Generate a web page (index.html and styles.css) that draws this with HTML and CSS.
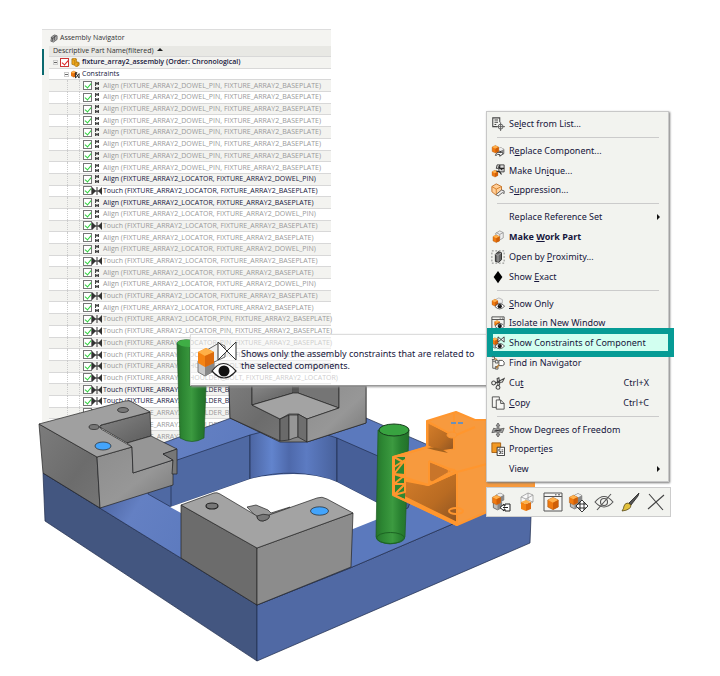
FILE: index.html
```html
<!DOCTYPE html>
<html lang="en">
<head>
<meta charset="utf-8">
<meta name="viewport" content="width=device-width, initial-scale=1">
<title>Assembly Navigator</title>
<link rel="stylesheet" href="styles.css">
</head>
<body>
<svg class="sprite" aria-hidden="true">
  <symbol id="cube" viewBox="0 0 16 16">
    <path d="M8 1l6 3v8l-6 3-6-3V4z" fill="#f07a10" stroke="#9a5415" stroke-width=".6"/>
    <path d="M8 1l6 3-6 3-6-3z" fill="#ffb14d"/><path d="M14 4v8l-6 3V7z" fill="#cf5f08"/>
  </symbol>
  <symbol id="greycube" viewBox="0 0 16 16">
    <path d="M8 1l6 3v8l-6 3-6-3V4z" fill="#bdbdbd" stroke="#444" stroke-width="1"/>
    <path d="M8 1l6 3-6 3-6-3z" fill="#eee"/><path d="M14 4v8l-6 3V7z" fill="#888"/>
  </symbol>
  <symbol id="eye" viewBox="0 0 16 10">
    <path d="M.6 5.500Q7.500-3.500 15.400 5 8 13 .6 5.500z" fill="#fff" stroke="#222" stroke-width="1"/>
    <circle cx="8" cy="5" r="3.200" fill="#161616"/><circle cx="7" cy="4" r=".7" fill="#999"/>
  </symbol>
  <symbol id="touch" viewBox="0 0 10 8">
    <path d="M0 0l4 4-4 4zM10 0L6 4l4 4z" fill="#333"/><path d="M5 0v8M0 4h10" stroke="#333"/>
  </symbol>
  <symbol id="align" viewBox="0 0 10 8">
    <path d="M3 0h1v1h2V0h1v3H6V2H4v2H3zM3 5h1v1h2V5h1v3H6V7H4v1H3z" fill="#444"/><path d="M5 0v3M5 5v3" stroke="#444"/>
  </symbol>
  <symbol id="clip" viewBox="0 0 10 10">
    <path d="M3 3l3-2 3 1v4L5 9 2 8z" fill="#aaa" stroke="#555" stroke-width=".8"/><path d="M4 4v4M6 2v5M2 4l2 1 4-3" stroke="#444" fill="none" stroke-width=".8"/>
  </symbol>
  <symbol id="assembly" viewBox="0 0 10 10">
    <path d="M1 1l3-1 2 1v3l3 1v3l-3 2-2-2-3-1z" fill="#f0a71c" stroke="#94660d" stroke-width=".7"/><path d="M1 1l3 2 2-2M4 3v5M4 6l2-1 3 1-2 1v2" stroke="#a87511" fill="none" stroke-width=".6"/>
  </symbol>
  <symbol id="constraints" viewBox="0 0 10 10">
    <use href="#cube" x="-1" width="8" height="9"/><path d="M5 3v6l4-5v5zM5 3h2" fill="#fff" stroke="#222"/>
  </symbol>
  <symbol id="select" viewBox="0 0 16 16">
    <path d="M7 11H2V1h8v5M4 3.500h4M4 6h4M4 8.500h2" fill="none" stroke="#444" stroke-width="1.200"/><circle cx="11" cy="11" r="2.800" fill="none" stroke="#555"/><path d="M11 6v10M6 11h10" stroke="#555"/>
  </symbol>
  <symbol id="replace" viewBox="0 0 16 16">
    <use href="#greycube" x="6" y="3" width="10" height="11"/><use href="#cube" width="10" height="12"/><path d="M5 13q2-5 6-3l-1-2 4 3-4 3v-2q-3-1-4 1z" fill="#fff" stroke="#222" stroke-width=".9"/>
  </symbol>
  <symbol id="unique" viewBox="0 0 16 16">
    <use href="#cube" y="6" width="9" height="10"/><path d="M7 1h8v8H9V5H6z" fill="#ddd" stroke="#333"/><path d="M8 3l5 4M10 1v4h5M6 8l4 1 2 3" fill="none" stroke="#222" stroke-width="1.300"/>
  </symbol>
  <symbol id="suppress" viewBox="0 0 16 16">
    <path d="M6 1l6 3v6l-6 4-5-4V4z" fill="#ffcf99" stroke="#c06b20"/><path d="M1 4l5 3 6-3M6 7v6" stroke="#d57b22" fill="none"/><path d="M6 13l6-5 3 1v3l-2-1-5 4z" fill="#eee" stroke="#555"/>
  </symbol>
  <symbol id="work" viewBox="0 0 16 16">
    <path d="M5 4l5-3 4 2v6l-5 3z" fill="#eee" stroke="#888" stroke-width=".8"/><path d="M6 3l4 2 4-2M10 5v5" stroke="#888" fill="none" stroke-width=".8"/><use href="#cube" x="1" y="4" width="10" height="12"/>
  </symbol>
  <symbol id="near" viewBox="0 0 16 16">
    <path d="M1 1h14v14H1z" fill="none" stroke="#777" stroke-dasharray="2 2"/><path d="M5 5l3-3 4 1v8l-3 3-4-1z" fill="#666" stroke="#222"/><path d="M5 5l3 1 4-3M8 6v8" stroke="#ccc" fill="none" stroke-width=".7"/>
  </symbol>
  <symbol id="exact" viewBox="0 0 16 16"><path d="M8 1l5 7-5 7-5-7z"/></symbol>
  <symbol id="showonly" viewBox="0 0 16 16">
    <path d="M5 3l4-2 4 2v4H5z" fill="#eee" stroke="#999" stroke-width=".7"/><use href="#cube" y="1" width="9" height="11"/><use href="#eye" x="4" y="6" width="12" height="9"/>
  </symbol>
  <symbol id="isolate" viewBox="0 0 16 16">
    <path d="M1 15V1h14v9M1 4h14M10 2.500h1M12.500 2.500h1" fill="none" stroke="#444"/><use href="#cube" x="3" y="4" width="8" height="9"/><use href="#eye" x="4" y="7" width="12" height="9"/>
  </symbol>
  <symbol id="showcon" viewBox="0 0 16 16">
    <use href="#greycube" y="5" width="9" height="10"/><use href="#cube" y="1" width="9" height="10"/><path d="M8 1v6l7-6v6z" fill="#fff" stroke="#333"/><use href="#eye" x="4" y="7" width="12" height="9"/>
  </symbol>
  <symbol id="find" viewBox="0 0 16 16">
    <path d="M2 4v10h3M2 6h3M1 1h3v3H1M5 5h3v3H5zM5 12h3v3H5z" fill="none" stroke="#555"/><path d="M9 5h4l2 2v3l-2 1H9z" fill="#fff" stroke="#444"/><path d="M9 10l-3 4M4 3l3 1" stroke="#b47a32" stroke-width="1.500"/>
  </symbol>
  <symbol id="cut" viewBox="0 0 16 16">
    <g fill="none" stroke="#444" stroke-width="1.200"><circle cx="3" cy="8" r="2.200"/><circle cx="8" cy="13" r="2.200"/><path d="M5 8l10-5-2 4-8 1M8 11l-1-8 2-1 1 7-1 2"/></g>
  </symbol>
  <symbol id="copy" viewBox="0 0 16 16">
    <g fill="#f6f6f3" stroke="#444"><path d="M1.500 1h8v12h-8z"/><path d="M6 4.500h5l4 4V15H6z"/><path d="M11 4.500v4h4" fill="none"/></g>
  </symbol>
  <symbol id="freedom" viewBox="0 0 16 16">
    <path d="M8 0l2 3H9v4l6-1-2 5-4-1v3h1l-2 3-2-3h1v-3l-6 1 2-5 4 1V3H6z" fill="#aaa" stroke="#444" stroke-width=".8"/><path d="M4 9l8-1" stroke="#222"/>
  </symbol>
  <symbol id="props" viewBox="0 0 16 16">
    <path d="M1 1h10v11H1z" fill="#f39a24" stroke="#a25a0c"/><path d="M7 6h8.500v9.500H7z" fill="#fff" stroke="#222"/><path d="M11 8H9v2.500h2V13H9M12 9h2M12 11h2M12 13h2" stroke="#333" fill="none"/>
  </symbol>
  <symbol id="t-replace" viewBox="0 0 20 20">
    <use href="#greycube" x="4" width="10" height="11"/><use href="#greycube" x="1" y="7" width="11" height="12"/><use href="#cube" y="2" width="11" height="12"/><path d="M14 12h5v7h-5v-2h-1v2l-4-3.500 4-3.500v2h1z" fill="#fff" stroke="#222"/><path d="M12 15.500h5" stroke="#222"/>
  </symbol>
  <symbol id="t-work" viewBox="0 0 20 20">
    <g fill="#f8f8f8" stroke="#999" stroke-width=".8"><path d="M4 5l7-4 5 2v7l-7 4-5-2z"/><path d="M4 5l5 2 7-4M9 7v7M11 1v7M4 11l7-3 5 2" fill="none"/></g><path d="M4 10l5 2v7l-5-2z" fill="#f58413"/><path d="M9 12l5-2v7l-5 2z" fill="#dc6a0c"/><path d="M4 10l5-2 5 2-5 2z" fill="#ffb047"/>
  </symbol>
  <symbol id="t-window" viewBox="0 0 20 20">
    <path d="M1 1h18v18H1zM1 4.500h18M12 2.800h1.500M15 2.800h2" fill="#f5f5f3" stroke="#555"/><use href="#cube" x="3" y="4" width="14" height="15"/>
  </symbol>
  <symbol id="t-move" viewBox="0 0 20 20">
    <use href="#greycube" x="5" width="10" height="12"/><use href="#greycube" x="1" y="6" width="11" height="12"/><use href="#cube" y="2" width="11" height="12"/><path d="M14 8l3 3h-2v2h2v-2l3 3-3 3v-2h-2v2h2l-3 3-3-3h2v-2h-2v2l-3-3 3-3v2h2v-2h-2z" fill="#fff" stroke="#222" stroke-width=".9"/>
  </symbol>
  <symbol id="t-hide" viewBox="0 0 20 20">
    <g fill="none" stroke="#555" stroke-width="1.100"><path d="M1 10q9-11 18 0-9 10-18 0z"/><circle cx="10" cy="10" r="3.500"/><path d="M3 18L17 2"/></g>
  </symbol>
  <symbol id="t-brush" viewBox="0 0 20 20">
    <path d="M19 1l-1 3-7 9-2-2z" fill="#555" stroke="#222" stroke-width=".8"/><path d="M8 11l3 2q0 5-9 6 2-3 2-5 1-3 4-3z" fill="#e2c13c" stroke="#554716" stroke-width=".8"/>
  </symbol>
  <symbol id="t-close" viewBox="0 0 20 20"><path d="M3 2l14 16M18 3L2 17" stroke="#444" stroke-width="1.100"/></symbol>
</svg>

<main class="workspace">
  <section class="navigator" aria-label="Assembly Navigator">
    <h1 class="nav-title"><svg class="nav-icon"><use href="#clip"/></svg>Assembly Navigator</h1>
    <table class="tree">
      <thead><tr><th>Descriptive Part Name(filtered) <span class="sort"></span></th></tr></thead>
      <tbody>
        <tr class="root"><td><label><span class="twist"></span><input class="red" type="checkbox" checked><svg class="nav-icon"><use href="#assembly"/></svg>fixture_array2_assembly (Order: Chronological)</label></td></tr>
        <tr class="group"><td><div><span class="twist"></span><svg class="nav-icon"><use href="#constraints"/></svg>Constraints</div></td></tr>
        <tr><td><label><input type="checkbox" checked><svg><use href="#align"/></svg>Align (FIXTURE_ARRAY2_DOWEL_PIN, FIXTURE_ARRAY2_BASEPLATE)</label></td></tr>
        <tr><td><label><input type="checkbox" checked><svg><use href="#align"/></svg>Align (FIXTURE_ARRAY2_DOWEL_PIN, FIXTURE_ARRAY2_BASEPLATE)</label></td></tr>
        <tr><td><label><input type="checkbox" checked><svg><use href="#align"/></svg>Align (FIXTURE_ARRAY2_DOWEL_PIN, FIXTURE_ARRAY2_BASEPLATE)</label></td></tr>
        <tr><td><label><input type="checkbox" checked><svg><use href="#align"/></svg>Align (FIXTURE_ARRAY2_DOWEL_PIN, FIXTURE_ARRAY2_BASEPLATE)</label></td></tr>
        <tr><td><label><input type="checkbox" checked><svg><use href="#align"/></svg>Align (FIXTURE_ARRAY2_DOWEL_PIN, FIXTURE_ARRAY2_BASEPLATE)</label></td></tr>
        <tr><td><label><input type="checkbox" checked><svg><use href="#align"/></svg>Align (FIXTURE_ARRAY2_DOWEL_PIN, FIXTURE_ARRAY2_BASEPLATE)</label></td></tr>
        <tr><td><label><input type="checkbox" checked><svg><use href="#align"/></svg>Align (FIXTURE_ARRAY2_DOWEL_PIN, FIXTURE_ARRAY2_BASEPLATE)</label></td></tr>
        <tr><td><label><input type="checkbox" checked><svg><use href="#align"/></svg>Align (FIXTURE_ARRAY2_DOWEL_PIN, FIXTURE_ARRAY2_BASEPLATE)</label></td></tr>
        <tr class="active"><td><label><input type="checkbox" checked><svg><use href="#align"/></svg>Align (FIXTURE_ARRAY2_LOCATOR, FIXTURE_ARRAY2_DOWEL_PIN)</label></td></tr>
        <tr class="active"><td><label><input type="checkbox" checked><svg><use href="#touch"/></svg>Touch (FIXTURE_ARRAY2_LOCATOR, FIXTURE_ARRAY2_BASEPLATE)</label></td></tr>
        <tr class="active"><td><label><input type="checkbox" checked><svg><use href="#align"/></svg>Align (FIXTURE_ARRAY2_LOCATOR, FIXTURE_ARRAY2_BASEPLATE)</label></td></tr>
        <tr><td><label><input type="checkbox" checked><svg><use href="#align"/></svg>Align (FIXTURE_ARRAY2_LOCATOR, FIXTURE_ARRAY2_DOWEL_PIN)</label></td></tr>
        <tr><td><label><input type="checkbox" checked><svg><use href="#touch"/></svg>Touch (FIXTURE_ARRAY2_LOCATOR, FIXTURE_ARRAY2_BASEPLATE)</label></td></tr>
        <tr><td><label><input type="checkbox" checked><svg><use href="#align"/></svg>Align (FIXTURE_ARRAY2_LOCATOR, FIXTURE_ARRAY2_BASEPLATE)</label></td></tr>
        <tr><td><label><input type="checkbox" checked><svg><use href="#align"/></svg>Align (FIXTURE_ARRAY2_LOCATOR, FIXTURE_ARRAY2_DOWEL_PIN)</label></td></tr>
        <tr><td><label><input type="checkbox" checked><svg><use href="#touch"/></svg>Touch (FIXTURE_ARRAY2_LOCATOR, FIXTURE_ARRAY2_BASEPLATE)</label></td></tr>
        <tr><td><label><input type="checkbox" checked><svg><use href="#align"/></svg>Align (FIXTURE_ARRAY2_LOCATOR, FIXTURE_ARRAY2_BASEPLATE)</label></td></tr>
        <tr><td><label><input type="checkbox" checked><svg><use href="#align"/></svg>Align (FIXTURE_ARRAY2_LOCATOR, FIXTURE_ARRAY2_DOWEL_PIN)</label></td></tr>
        <tr><td><label><input type="checkbox" checked><svg><use href="#touch"/></svg>Touch (FIXTURE_ARRAY2_LOCATOR, FIXTURE_ARRAY2_BASEPLATE)</label></td></tr>
        <tr><td><label><input type="checkbox" checked><svg><use href="#align"/></svg>Align (FIXTURE_ARRAY2_LOCATOR, FIXTURE_ARRAY2_BASEPLATE)</label></td></tr>
        <tr><td><label><input type="checkbox" checked><svg><use href="#touch"/></svg>Touch (FIXTURE_ARRAY2_LOCATOR_PIN, FIXTURE_ARRAY2_BASEPLATE)</label></td></tr>
        <tr><td><label><input type="checkbox" checked><svg><use href="#touch"/></svg>Touch (FIXTURE_ARRAY2_LOCATOR_PIN, FIXTURE_ARRAY2_BASEPLATE)</label></td></tr>
        <tr><td><label><input type="checkbox" checked><svg><use href="#touch"/></svg>Touch (FIXTURE_ARRAY2_LOCATOR_PIN, FIXTURE_ARRAY2_BASEPLATE)</label></td></tr>
        <tr><td><label><input type="checkbox" checked><svg><use href="#touch"/></svg>Touch (FIXTURE_ARRAY2_LOCATOR_PIN, FIXTURE_ARRAY2_BASEPLATE)</label></td></tr>
        <tr><td><label><input type="checkbox" checked><svg><use href="#touch"/></svg>Touch (FIXTURE_ARRAY2_SHOULDER_BOLT, FIXTURE_ARRAY2_LOCATOR)</label></td></tr>
        <tr><td><label><input type="checkbox" checked><svg><use href="#touch"/></svg>Touch (FIXTURE_ARRAY2_SHOULDER_BOLT, FIXTURE_ARRAY2_LOCATOR)</label></td></tr>
        <tr class="active"><td><label><input type="checkbox" checked><svg><use href="#touch"/></svg>Touch (FIXTURE_ARRAY2_SHOULDER_BOLT, FIXTURE_ARRAY2_LOCATOR)</label></td></tr>
        <tr class="active"><td><label><input type="checkbox" checked><svg><use href="#touch"/></svg>Touch (FIXTURE_ARRAY2_SHOULDER_BOLT, FIXTURE_ARRAY2_LOCATOR)</label></td></tr>
        <tr><td><label><input type="checkbox" checked><svg><use href="#touch"/></svg>Touch (FIXTURE_ARRAY2_SHOULDER_BOLT, FIXTURE_ARRAY2_LOCATOR)</label></td></tr>
        <tr><td><label><input type="checkbox" checked><svg><use href="#touch"/></svg>Touch (FIXTURE_ARRAY2_SHOULDER_BOLT, FIXTURE_ARRAY2_LOCATOR)</label></td></tr>
        <tr><td><label><input type="checkbox" checked><svg><use href="#touch"/></svg>Touch (FIXTURE_ARRAY2_SHOULDER_BOLT, FIXTURE_ARRAY2_LOCATOR)</label></td></tr>
      </tbody>
    </table>
  </section>

  <svg class="model" viewBox="0 0 720 676" role="img" aria-label="Fixture assembly model">
    <defs>
      <linearGradient id="pin"><stop offset="0" stop-color="#27732b"/><stop offset=".2" stop-color="#2d8733"/><stop offset=".5" stop-color="#3c9a40"/><stop offset=".75" stop-color="#288030"/><stop offset="1" stop-color="#23702a"/></linearGradient>
      <linearGradient id="bore"><stop offset="0" stop-color="#4c65a2"/><stop offset=".25" stop-color="#6284cd"/><stop offset=".45" stop-color="#4e69ab"/><stop offset=".65" stop-color="#5c7bc2"/><stop offset="1" stop-color="#48619b"/></linearGradient>
      <linearGradient id="deck" gradientUnits="userSpaceOnUse" x1="100" y1="500" x2="200" y2="560"><stop offset="0" stop-color="#4c64a0"/><stop offset=".3" stop-color="#6480c3"/><stop offset="1" stop-color="#5b79bd"/></linearGradient>
      <linearGradient id="side" x1="0" y1="0" x2="1" y2="1"><stop offset="0" stop-color="#7c7c7c"/><stop offset=".6" stop-color="#6c6c6c"/><stop offset="1" stop-color="#757575"/></linearGradient>
      <linearGradient id="front" x1="0" y1="0" x2="1" y2="1"><stop offset="0" stop-color="#8d8d8d"/><stop offset=".55" stop-color="#979797"/><stop offset="1" stop-color="#777"/></linearGradient>
      <linearGradient id="inner" x1="0" y1="0" x2="1" y2="1"><stop offset="0" stop-color="#878787"/><stop offset="1" stop-color="#5c5c5c"/></linearGradient>
      <linearGradient id="rust" x1="0" y1="0" x2="1" y2="1"><stop offset="0" stop-color="#d57e2a"/><stop offset=".6" stop-color="#b96b22"/><stop offset="1" stop-color="#8d5423"/></linearGradient>
    </defs>
    <g stroke="#1e2b4b" stroke-width=".7" stroke-linejoin="round">
      <path d="M43 473L257 605V661L45 521z" fill="#435680"/>
      <path d="M257 605L350 568 532 490 530 543 257 661z" fill="#5069a4"/>
      <path d="M43 473L163 443 231 418H366L532 490 350 568 257 605z" fill="url(#deck)"/>
      <path d="M148 470L250 435V479L171 507 148 494z" fill="#4f69a3"/>
      <path d="M171 470V507" fill="none"/>
      <path d="M250 435L293 424 337 438V482Q295 466 250 479z" fill="url(#bore)"/>
      <path d="M337 438L378 456 420 475 408 508 395 512 337 482z" fill="#475f98"/>
      <path d="M170 507L250 479Q263 475 293 474 318 474 337 482L395 512 408 507 353 529 257 560 181 513z" fill="#fff" stroke="none"/>
    </g>
    <g stroke="#222" stroke-width=".7" stroke-linejoin="round">
      <path d="M229 386H366V423L307 442H280L230 418z" fill="#858585"/>
      <path d="M229 386H252V405L280 419V441L230 418z" fill="url(#side)"/>
      <path d="M252 386H293V393L252 405z" fill="url(#inner)"/>
      <path d="M298 386H339V408L298 393z" fill="#757575"/>
      <path d="M293 386h5v8h-5z" fill="#555" stroke="none"/>
      <path d="M252 405L293 393H298L339 408 307 419 298 414H289L280 419z" fill="#a3a3a3"/>
      <path d="M280 419L289 415V440L280 441z" fill="#6a6a6a"/>
      <path d="M289 415H298V437L294 438 289 440z" fill="#969696"/>
      <path d="M298 414L307 419V442L298 437z" fill="#6e6e6e"/>
      <path d="M307 419L339 408V386H366V423L307 442z" fill="url(#front)"/>
    </g>
    <path d="M177 343Q180 339 190 340V386H206L204 438Q192 445 180 438z" fill="url(#pin)" stroke="#1d5c22" stroke-width=".7"/>
    <path d="M177 343Q180 339 190 340V347Q180 347 177 343z" fill="#3fae45"/>

    <g stroke="#222" stroke-width=".7" stroke-linejoin="round">
      <path d="M39 424L97 457 100 508 43 473z" fill="url(#side)"/>
      <path d="M97 457L132 447 133 473 173 460V485L100 508z" fill="url(#front)"/>
      <path d="M98 426L150 412 151 436 127 443z" fill="url(#inner)"/>
      <path d="M127 443L151 436 177 449 163 454 173 460 133 473 132 447z" fill="#969696"/>
      <path d="M177 449V474L172 474 173 460 163 454z" fill="#777"/>
      <path d="M39 424L125 401Q129 400 132 402L150 412 101 425Q98 427 101 429L132 447 97 457z" fill="#a0a0a0"/>
      <ellipse cx="123" cy="410" rx="5.500" ry="2.500" fill="#777" stroke="#222"/>
      <ellipse cx="94" cy="427" rx="5" ry="2.500" fill="#777" stroke="#222"/>
      <ellipse cx="103" cy="446" rx="8" ry="4" fill="#43a4fb"/>
    </g>
    <g stroke="#222" stroke-width=".7" stroke-linejoin="round">
      <path d="M247 507L256 505 268 510 271 513 290 507 290 512 262 523z" fill="#999"/>
      <path d="M181 505L257 548V605L181 558z" fill="#6c6c6c"/>
      <path d="M257 548L353 513 351 567 257 605z" fill="#8c8c8c"/>
      <path d="M181 505L214 493Q217 492 220 494L257 516Q257 521 263 521 270 519 269 515L317 498Q322 496 327 499L353 513 257 548z" fill="#a3a3a3"/>
      <path d="M257 516Q263 513 269 515 271 519 263 521 257 521 257 516z" fill="#777"/>
      <ellipse cx="212" cy="506" rx="6" ry="3" fill="#777" stroke-width="1.200"/>
      <ellipse cx="319.500" cy="511" rx="9" ry="4.200" fill="#43a4fb"/>
    </g>
    <path d="M378 430L376 537Q378 543 390 544 402 543 405 537L409 430z" fill="url(#pin)" stroke="#1d5c22" stroke-width=".7"/>
    <ellipse cx="394" cy="430" rx="15" ry="6" fill="#38a340" stroke="#173d1b"/>
    <ellipse cx="390.500" cy="538" rx="14" ry="5.500" fill="none" stroke="#1b6322"/>
    <g stroke="#ff962e" stroke-width="2" stroke-linejoin="round">
      <path d="M456 412L427 421V447L393 457V495L457 525 487 512 534 488V420H475z" fill="#f79a3e"/>
      <path d="M428 423L454 436V449L440 451 428 446z" fill="url(#rust)" stroke-width="1"/>
      <path d="M429 461L451 471 432 482 429 480z" fill="#c9752a" stroke-width="1"/>
      <path d="M402 480L428 485 457 472V523L402 496z" fill="url(#rust)"/>
      <path d="M393 457H405V499L393 495z" fill="#2d8733" stroke="none"/>
      <path d="M394 457V495L457 525V472L428 485 394 474M394 457L405 463V492L394 495M394 457L428 447M394 467L405 460 394 474 405 475 394 484 405 484 394 495M454 414V450M429 461V484M429 461L457 472 487 464M427 421L454 436 475 427" fill="none"/>
      <ellipse cx="452" cy="435" rx="5" ry="3" fill="#f79a3e" stroke-width="1"/>
      <ellipse cx="456" cy="511" rx="7" ry="3" fill="none"/>
      <ellipse cx="452" cy="471" rx="4" ry="2" fill="none" stroke-width="1"/>
    </g>
    <path d="M427 448Q438 446 448 453L434 450z" fill="#a4621f"/>
    <path d="M451 422h5v2h-5zM458 422h5v2h-5z" fill="#6d90b8"/>
  </svg>

  <div class="tooltip" role="tooltip">
    <svg class="tip-icon" viewBox="0 0 40 38">
      <path d="M10 9L22 2 28 5V16L15 22z" fill="#eee" stroke="#666"/>
      <path d="M1 20L8 24 17 20V30L8 35 1 31z" fill="#c8c8c8" stroke="#777"/><path d="M8 24V35L17 30V20z" fill="#888"/>
      <path d="M1 11L9 7 17 11V22L8 26 1 22z" fill="#f58413"/><path d="M1 11L9 7 17 11 8 15z" fill="#ffb047"/><path d="M8 15L17 11V22L8 26z" fill="#dc6a0c"/>
      <path d="M21 1V19L39 1V19z" fill="#fff" stroke="#333"/>
      <path d="M15 30Q26 15 39 30 27 44 15 30z" fill="#fff" stroke="#222" stroke-width="1.200"/><circle cx="27" cy="30" r="5.500" fill="#111"/>
    </svg>
    <p>Shows only the assembly constraints that are related to the selected components.</p>
  </div>

  <div class="popup">
    <div class="menu" role="menu">
      <button role="menuitem"><svg><use href="#select"/></svg><span>Se<u>l</u>ect from List...</span></button>
      <hr>
      <button role="menuitem"><svg><use href="#replace"/></svg><span>R<u>e</u>place Component...</span></button>
      <button role="menuitem"><svg><use href="#unique"/></svg><span>Make Un<u>i</u>que...</span></button>
      <button role="menuitem"><svg><use href="#suppress"/></svg><span>S<u>u</u>ppression...</span></button>
      <hr>
      <button role="menuitem"><svg></svg><span>Replace Reference Set</span><i class="more"></i></button>
      <button role="menuitem"><svg><use href="#work"/></svg><span class="default">Make <u>W</u>ork Part</span></button>
      <button role="menuitem"><svg><use href="#near"/></svg><span>Open by <u>P</u>roximity...</span></button>
      <button role="menuitem"><svg><use href="#exact"/></svg><span>Show <u>E</u>xact</span></button>
      <hr>
      <button role="menuitem"><svg><use href="#showonly"/></svg><span><u>S</u>how Only</span></button>
      <button role="menuitem"><svg><use href="#isolate"/></svg><span>Isolate in New Window</span></button>
      <button role="menuitem" class="current"><svg><use href="#showcon"/></svg><span>Show Constraints of Component</span></button>
      <button role="menuitem"><svg><use href="#find"/></svg><span>Find in Navigator</span></button>
      <button role="menuitem"><svg><use href="#cut"/></svg><span>Cu<u>t</u></span><kbd>Ctrl+X</kbd></button>
      <button role="menuitem"><svg><use href="#copy"/></svg><span><u>C</u>opy</span><kbd>Ctrl+C</kbd></button>
      <hr>
      <button role="menuitem"><svg><use href="#freedom"/></svg><span>Show Degrees of Freedom</span></button>
      <button role="menuitem"><svg><use href="#props"/></svg><span>Propert<u>i</u>es</span></button>
      <button role="menuitem"><svg></svg><span>View</span><i class="more"></i></button>
    </div>
    <div class="toolbar" role="toolbar">
      <button aria-label="Replace Component"><svg><use href="#t-replace"/></svg></button>
      <button aria-label="Make Work Part"><svg><use href="#t-work"/></svg></button>
      <button aria-label="Open in Window"><svg><use href="#t-window"/></svg></button>
      <button aria-label="Move Component"><svg><use href="#t-move"/></svg></button>
      <button aria-label="Hide"><svg><use href="#t-hide"/></svg></button>
      <button aria-label="Edit Object Display"><svg><use href="#t-brush"/></svg></button>
      <button aria-label="Delete"><svg><use href="#t-close"/></svg></button>
    </div>
  </div>
</main>
</body>
</html>
```
FILE: styles.css
```css
* { box-sizing: border-box; }
body { margin: 0; background: #fff; color: #16163c; font-family: "Noto Sans", "Open Sans", sans-serif; }
.sprite { position: absolute; width: 0; height: 0; }
.workspace { position: relative; min-height: 100vh; padding: 29px 0 0 42px; overflow: hidden; }

.navigator {
  position: relative;
  width: 289px;
  padding-left: 7px;
  background: #f4f4f1;
  border-top: 1px solid #ddd;
  font-family: "Open Sans", "Noto Sans", sans-serif;
  font-size: 7px;
  line-height: 10px;
}
.navigator::before { content: ""; position: absolute; left: 0; top: 19px; width: 2px; height: 26px; background: #0b6a70; }
.nav-title { display: flex; align-items: center; gap: 2px; height: 16px; margin: 0; font-size: 7px; font-weight: 400; color: #333; }
.nav-icon { width: 9px; height: 9px; flex: none; }
.tree { width: 100%; height: 397px; border-collapse: collapse; table-layout: fixed; }
.tree th, .tree td { padding: 0; border-bottom: 1px solid #d8d8d8; white-space: nowrap; }
.tree th { padding-left: 4px; background: #e8e8e4; text-align: left; font-weight: 400; color: #333; }
.sort { display: inline-block; margin: 0 0 2px 2px; border: 3px solid transparent; border-top: 0; border-bottom-color: #222; }
.tree tbody tr { background: #fff; color: #999; }
.tree tbody tr:nth-child(odd) { background: #f3f3f0; }
.tree label, .tree div { position: relative; display: flex; align-items: center; height: 10px; padding-left: 34px; }
.tree label::before { content: ""; position: absolute; left: 18px; top: -1px; width: 11px; height: 12px; border: 1px dotted #ccc; border-width: 0 1px; }
.tree label > svg { flex: none; width: 10px; height: 8px; margin-right: 1px; }
.tree .root label, .tree .group div { gap: 2px; color: #16163c; }
.tree .root label { padding-left: 4px; font-weight: 600; }
.tree .root label::before { display: none; }
.tree .group div { padding-left: 15px; }
.tree .root svg, .tree .group svg { width: 9px; height: 9px; margin: 0; }
.tree .active { color: #16163c; }
.tree input { appearance: none; position: relative; flex: none; width: 9px; height: 9px; margin: 0; border: 1px solid #777; background: #fff; }
.tree input:checked::before { content: ""; position: absolute; left: 2px; top: 0; width: 3px; height: 5px; border: solid #2cd03c; border-width: 0 1px 1px 0; transform: rotate(40deg); }
.tree input.red { border-color: #c33; }
.tree input.red:checked::before { border-color: #d22; }
.twist { position: relative; flex: none; width: 5px; height: 5px; border: 1px solid #ccc; }
.twist::before { content: ""; position: absolute; left: 0; right: 0; top: 1px; height: 1px; background: #666; }

.model { position: absolute; left: 0; top: 0; width: 100%; }

.tooltip {
  position: absolute; left: 190px; top: 334px; width: 298px; height: 52px;
  display: flex; align-items: center; gap: 4px; padding: 4px 4px 4px 6px;
  background: rgba(255, 255, 255, .5); border: 1px solid #ddd; border-bottom-color: #999;
  box-shadow: 1px 1px 2px #999;
}
.tip-icon { width: 40px; height: 38px; flex: none; }
.tooltip p { margin: 0; font-size: 9px; line-height: 12px; }

.popup { position: absolute; left: 486px; top: 111px; display: flex; flex-direction: column; gap: 5px; width: 185px; }
.menu {
  position: relative; display: flex; flex-direction: column; min-height: 371px; margin-right: 2px; padding: 2px 0;
  background: #f2f3ef; border: 1px solid #c8c8c8; box-shadow: 1px 1px 2px #777;
}
.menu hr { width: 162px; height: 1px; margin: 3px auto; border: 0; background: #cbcbcb; }
.menu button {
  position: relative; flex: 1; display: flex; align-items: center; gap: 4px; padding: 0 8px 0 4px;
  border: 0; background: none; color: inherit; font: inherit; font-size: 9px; line-height: 12px; text-align: left;
}
.menu svg { width: 14px; height: 14px; flex: none; }
.menu span { flex: 1; white-space: nowrap; }
.menu .default { font-weight: 700; }
.menu u { text-underline-offset: 1px; text-decoration-thickness: 1px; }
.menu kbd { margin-right: 11px; font: inherit; }
.more { border: 3px solid transparent; border-left: 3px solid #111; border-right: 0; }
.menu .current { background: #d2fff0; }
.menu .current::after { content: ""; position: absolute; inset: -5px -6px -4px 0; border: 6px solid #069b95; }

.toolbar { display: flex; justify-content: space-between; padding: 4px; background: #f2f3ef; border: 1px solid #ccc; }
.toolbar button { display: flex; padding: 0; border: 0; background: none; }
.toolbar svg { width: 20px; height: 20px; }
```
